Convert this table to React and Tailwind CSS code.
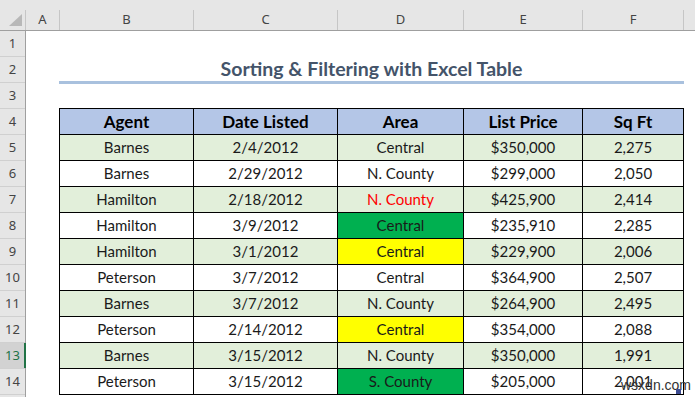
const cols = [
  { key: 'A', w: 'w-[34px]' },
  { key: 'B', w: 'w-[134px]' },
  { key: 'C', w: 'w-[144px]' },
  { key: 'D', w: 'w-[126px]' },
  { key: 'E', w: 'w-[119px]' },
  { key: 'F', w: 'w-[101px]' },
]

const tableWidths = ['w-[134px]', 'w-[144px]', 'w-[126px]', 'w-[119px]', 'w-[101px]']
const headers = ['Agent', 'Date Listed', 'Area', 'List Price', 'Sq Ft']

// agent, date, area, price, sqft, area style
const rows = [
  ['Barnes', '2/4/2012', 'Central', '$350,000', '2,275', null],
  ['Barnes', '2/29/2012', 'N. County', '$299,000', '2,050', null],
  ['Hamilton', '2/18/2012', 'N. County', '$425,900', '2,414', 'red'],
  ['Hamilton', '3/9/2012', 'Central', '$235,910', '2,285', 'green'],
  ['Hamilton', '3/1/2012', 'Central', '$229,900', '2,006', 'yellow'],
  ['Peterson', '3/7/2012', 'Central', '$364,900', '2,507', null],
  ['Barnes', '3/7/2012', 'N. County', '$264,900', '2,495', null],
  ['Peterson', '2/14/2012', 'Central', '$354,000', '2,088', 'yellow'],
  ['Barnes', '3/15/2012', 'N. County', '$350,000', '1,991', null],
  ['Peterson', '3/15/2012', 'S. County', '$205,000', '2,001', 'green'],
]

const areaStyle = {
  red: 'text-[#ff0000]',
  green: 'bg-[#00b050]',
  yellow: 'bg-[#ffff00]',
}

export default function App() {
  return (
    <div className="relative w-[695px] h-[397px] overflow-hidden bg-white font-['Lato',sans-serif] text-[#1a1a1a]">
      {/* Column headers */}
      <div className="h-[31px] flex items-end bg-[#e6e6e6] border-b border-[#9f9f9f] font-['Noto_Sans',sans-serif] text-[13px] text-[#444]">
        <div className="w-[26px] h-[20px] relative border-r border-[#c6c6c6]">
          <svg className="absolute left-[9px] top-[4px]" width="14" height="13" viewBox="0 0 14 13">
            <polygon points="0,12 13,12 13,0" fill="#b8b8b8" />
          </svg>
        </div>
        {cols.map((c) => (
          <div key={c.key} className={`${c.w} h-[20px] flex items-center justify-center border-r border-[#c6c6c6]`}>
            {c.key}
          </div>
        ))}
        <div className="flex-1 h-[20px]" />
      </div>

      <div className="flex">
        {/* Row headers */}
        <div className="w-[26px] flex flex-col bg-[#e6e6e6] border-r border-[#9f9f9f] font-['Noto_Sans',sans-serif] text-[13px] text-[#444]">
          {Array.from({ length: 14 }, (_, i) => i + 1).map((n) => (
            <div
              key={n}
              className={`h-[26px] shrink-0 flex items-center justify-center border-b border-[#d0d0d0] ${
                n === 13 ? 'bg-[#d2d2d2] text-[#217346] relative' : ''
              }`}
            >
              {n}
              {n === 13 && <span className="absolute right-[-1px] top-0 bottom-0 w-[2px] bg-[#217346]" />}
            </div>
          ))}
          <div className="h-[26px] shrink-0" />
        </div>

        {/* Sheet body */}
        <div className="pl-[33px] flex-1">
          <div className="h-[26px]" />
          <div className="w-[625px] h-[27px] flex items-center justify-center border-b-[3px] border-[#a9c1de] text-[19.5px] font-bold text-[#44546a] font-['Lato',sans-serif]">
            Sorting &amp; Filtering with Excel Table
          </div>
          <div className="h-[24px]" />

          <div className="w-[625px] border-l border-t border-black">
            <div className="flex bg-[#b4c6e7]">
              {headers.map((h, i) => (
                <div key={h} className={`${tableWidths[i]} h-[26px] flex items-center justify-center border-r border-b border-black text-[17px] font-bold text-black`}>
                  {h}
                </div>
              ))}
            </div>
            {rows.map((r, ri) => (
              <div key={ri} className={`flex text-[15px] ${ri % 2 === 0 ? 'bg-[#e2efda]' : 'bg-white'}`}>
                {r.slice(0, 5).map((v, ci) => (
                  <div
                    key={ci}
                    className={`${tableWidths[ci]} h-[26px] flex items-center justify-center border-r border-b border-black ${
                      ci === 2 && r[5] ? areaStyle[r[5]] : ''
                    }`}
                  >
                    {v}
                  </div>
                ))}
              </div>
            ))}
          </div>
        </div>
      </div>

      {/* watermark + table resize handle */}
      <div className="absolute left-[621px] top-[378px] text-[14px] text-[#333] font-['Liberation_Sans',sans-serif] leading-none">
        wsxdn.com
      </div>
      <div className="absolute left-[676px] top-[389px] w-[5px] h-[5px] bg-[#3d4c92]" />
    </div>
  )
}
